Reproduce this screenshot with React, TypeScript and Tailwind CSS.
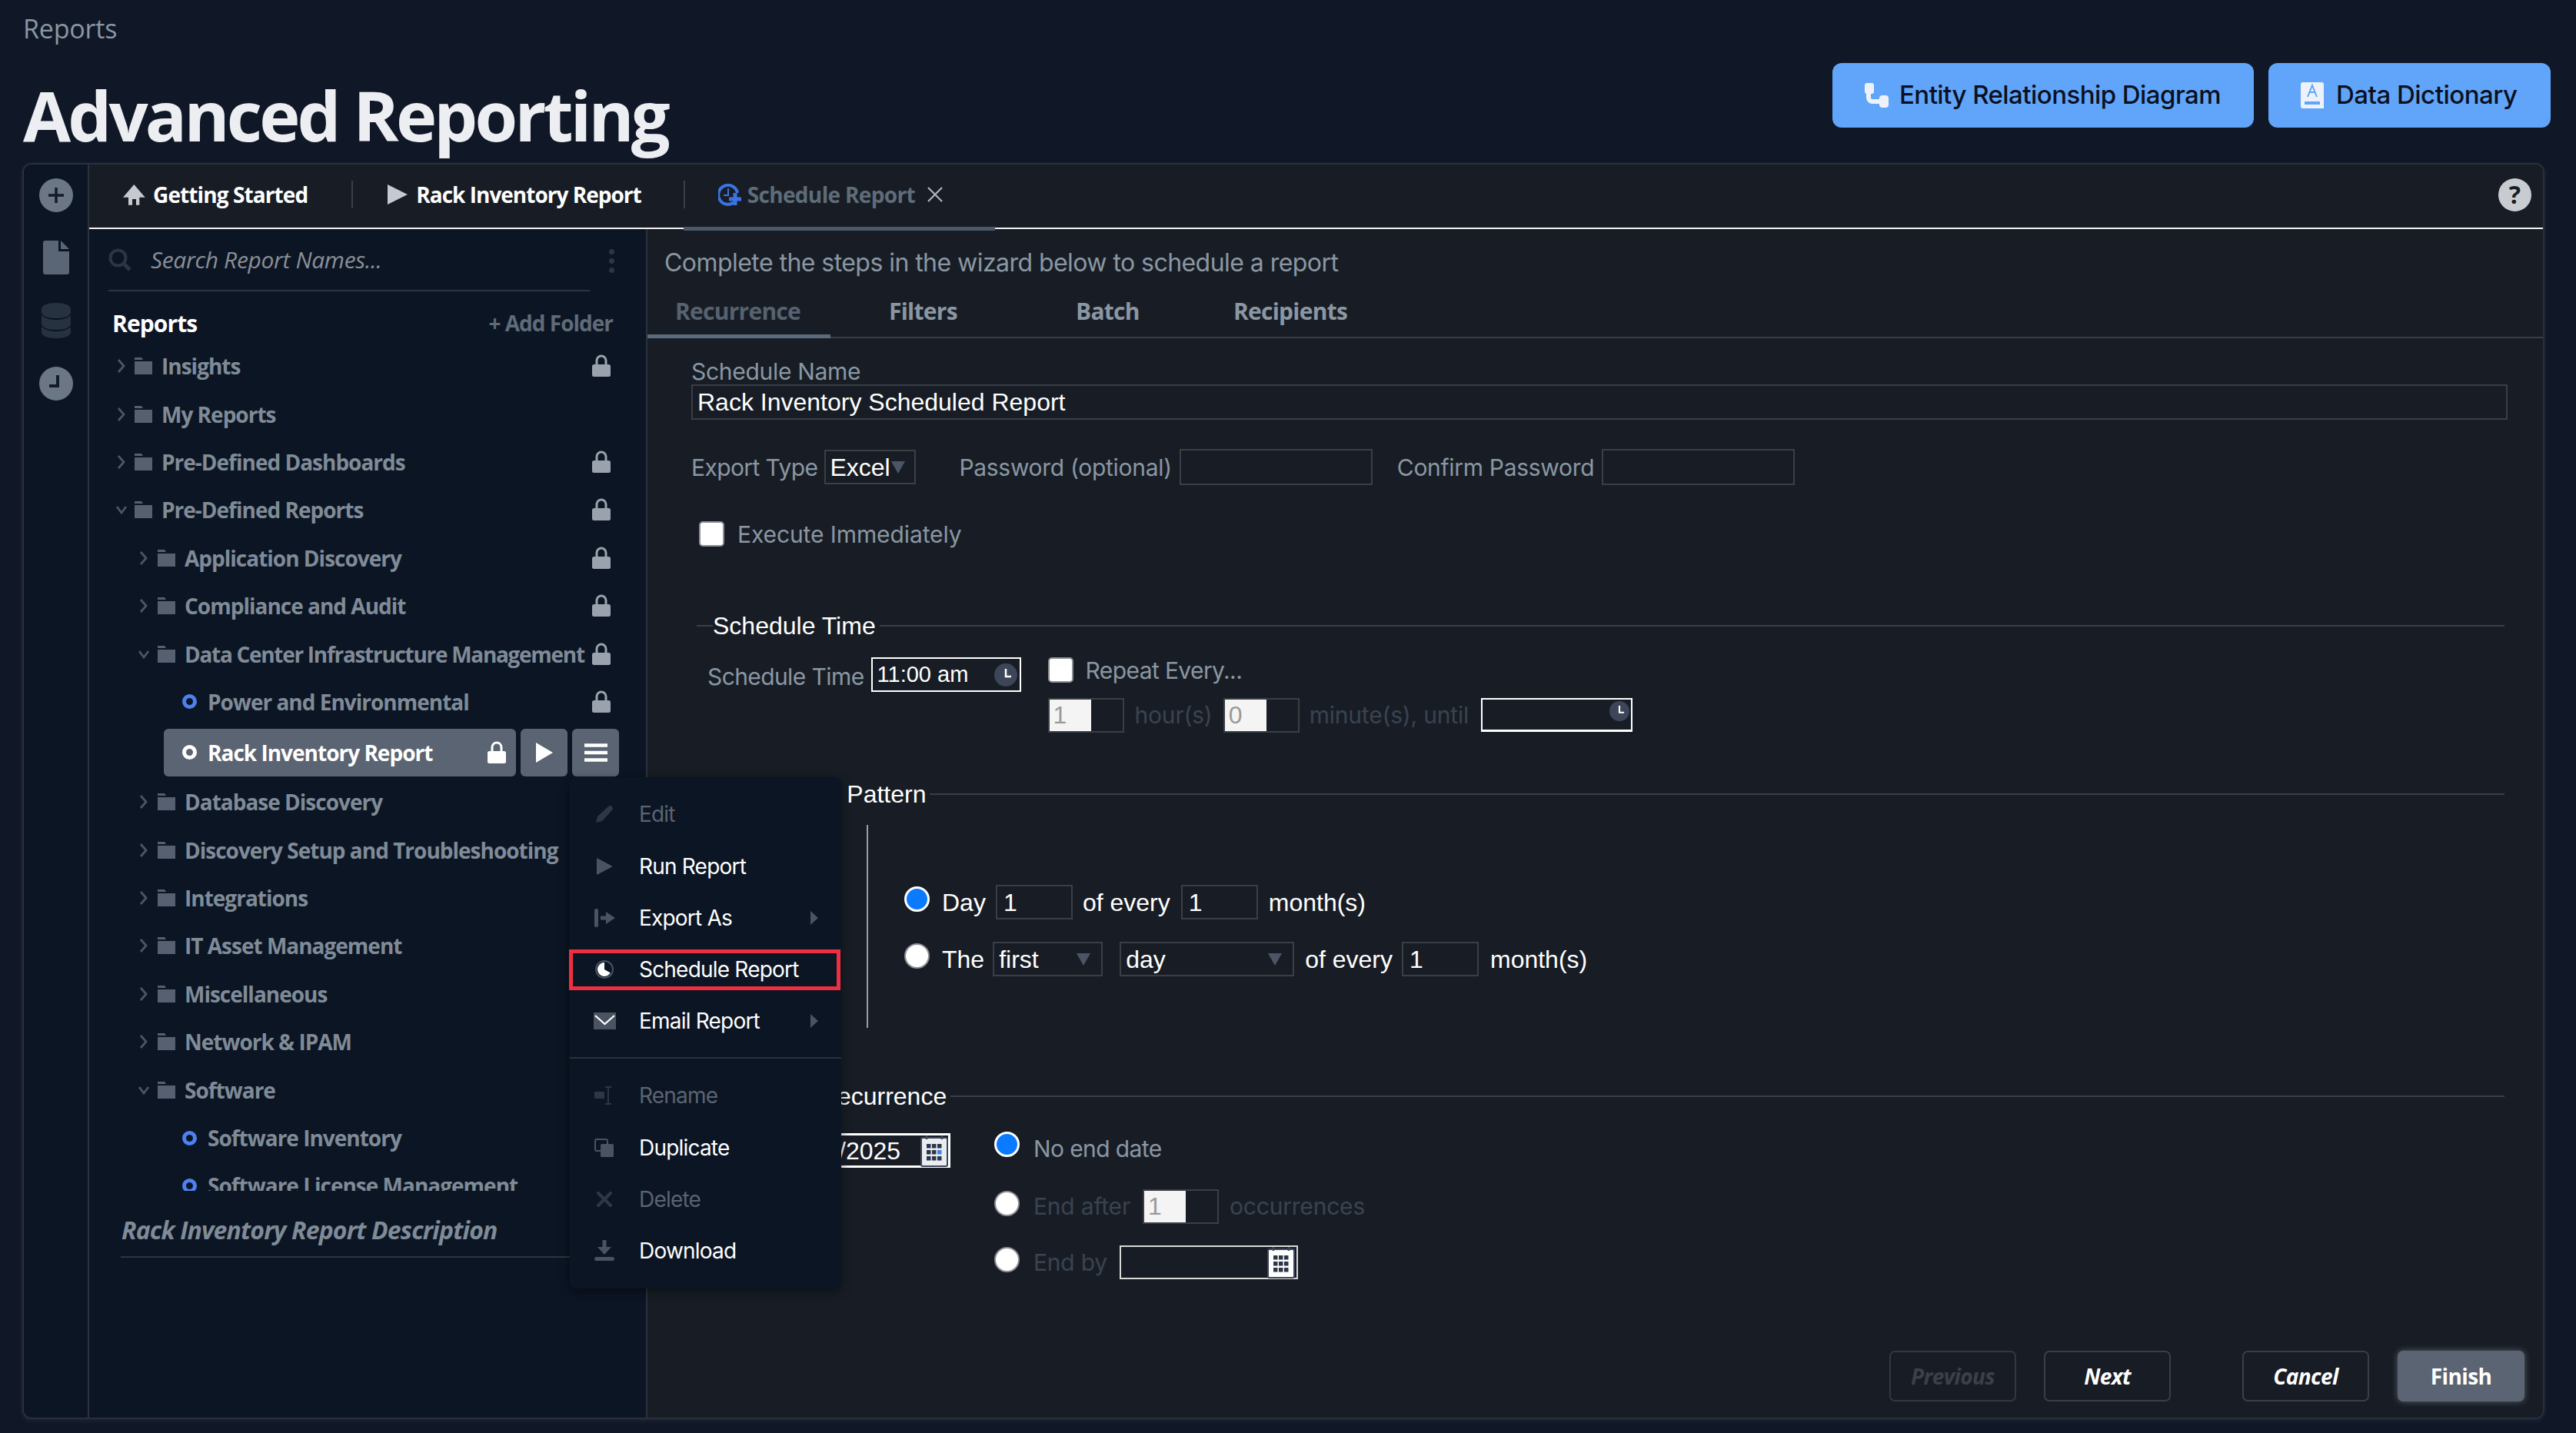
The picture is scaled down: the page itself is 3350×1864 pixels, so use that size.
import React from "react";

const LINE = "bg-[#3a3e45]";
const UI = "font-['Inter',sans-serif]";
const OS = "font-['Open_Sans',sans-serif]";
const AR = "font-['Liberation_Sans',sans-serif]";
const LBL = "font-['Inter',sans-serif] text-[30px] leading-[36px] tracking-[-0.3px] text-[#8a97a3] whitespace-nowrap";
const LBL2 = "font-['Inter',sans-serif] text-[30px] leading-[36px] tracking-[-0.6px] text-[#8a97a3] whitespace-nowrap";
const LBL3 = "font-['Inter',sans-serif] text-[30px] leading-[36px] tracking-[-0.1px] text-[#8a97a3] whitespace-nowrap";
const WHT = "font-['Liberation_Sans',sans-serif] text-[32px] leading-[36px] text-white whitespace-nowrap";
const DIM = "font-['Inter',sans-serif] text-[30px] leading-[36px] tracking-[-0.2px] text-[#3a4350] whitespace-nowrap";
const TREE = "font-['Open_Sans',sans-serif] text-[28px] font-bold tracking-[-1px] whitespace-nowrap";
const TREE_T = "font-['Open_Sans',sans-serif] text-[28px] font-bold tracking-[-1.3px] whitespace-nowrap";

const Lock = ({ c = "#9aa3ad" }: { c?: string }) => (
  <svg width="26" height="30" viewBox="0 0 26 30" className="shrink-0">
    <path d="M7 14V8a6 6 0 0 1 12 0v6" fill="none" stroke={c} strokeWidth="3" />
    <rect x="1" y="13" width="24" height="16" rx="2.5" fill={c} />
  </svg>
);
const Chevron = ({ open }: { open?: boolean }) => (
  <svg width="14" height="18" viewBox="0 0 14 18" className="shrink-0">
    {open ? (
      <path d="M1 5l6 8 6-8" fill="none" stroke="#4c5663" strokeWidth="2.8" />
    ) : (
      <path d="M3 1l7 8-7 8" fill="none" stroke="#4c5663" strokeWidth="2.8" />
    )}
  </svg>
);
const Folder = () => (
  <svg width="25" height="22" viewBox="0 0 25 22" className="shrink-0">
    <path d="M1 0h9l2 3H1z" fill="#566070" />
    <rect x="1" y="5" width="23" height="17" fill="#566070" />
  </svg>
);
const Dot = ({ c = "#4b82f0" }: { c?: string }) => (
  <span className="w-[19px] h-[19px] shrink-0 rounded-full border-[5px]" style={{ borderColor: c }} />
);

type RowP = { label: string; level: 1 | 2; open?: boolean; lock?: boolean; tight?: boolean };
const FolderRow = ({ label, level, open, lock, tight }: RowP) => (
  <div className={`h-[62.4px] flex items-center shrink-0 pr-[45px] ${level === 1 ? "pl-[35px]" : "pl-[64px]"}`}>
    <Chevron open={open} />
    <span className={level === 1 ? "ml-[9px]" : "ml-[10px]"}><Folder /></span>
    <span className={`${tight ? TREE_T : TREE} ml-[11px] text-[#7f8b97]`}>{label}</span>
    {lock && <span className="ml-auto"><Lock /></span>}
  </div>
);
const LeafRow = ({ label, lock }: { label: string; lock?: boolean }) => (
  <div className="h-[62.4px] flex items-center shrink-0 pl-[121px] pr-[45px]">
    <Dot />
    <span className={`${TREE} ml-[14px] text-[#7f8b97]`}>{label}</span>
    {lock && <span className="ml-auto"><Lock /></span>}
  </div>
);

const MItem = ({ icon, label, dim, arrow, cls = "" }: { icon: React.ReactNode; label: string; dim?: boolean; arrow?: boolean; cls?: string }) => (
  <div className={`flex items-center h-[67px] relative ${cls}`}>
    <span className="w-[90px] flex justify-center shrink-0">{icon}</span>
    <span className={`${UI} text-[28px] tracking-[-0.8px] whitespace-nowrap ${dim ? "text-[#5a6472]" : "text-white"}`}>{label}</span>
    {arrow && (
      <svg width="12" height="18" viewBox="0 0 12 18" className="absolute right-[29px]"><path d="M1 0l10 9-10 9z" fill="#4a5361" /></svg>
    )}
  </div>
);

const Menu = () => (
  <div className="absolute left-[625px] top-[713px] w-[353px] h-[665px] bg-[#0c1524] rounded-[8px] shadow-[0_4px_14px_rgba(0,0,0,0.45)] z-10 pt-[14px]">
    <MItem dim label="Edit" icon={
      <svg width="22" height="22" viewBox="0 0 22 22"><path d="M0 22l2-8L15 2l2-1.500a2 2 0 0 1 3 0l1.500 1.500a2 2 0 0 1 0 3L20 7 8 20z" fill="#2f3745" /></svg>
    } />
    <MItem label="Run Report" cls="mt-[1px]" icon={
      <svg width="20" height="22" viewBox="0 0 20 22"><path d="M2 1l17 9a1 1 0 0 1 0 2L2 21a1 1 0 0 1-2-1V2a1 1 0 0 1 2-1z" fill="#4a5361" /></svg>
    } />
    <MItem label="Export As" arrow icon={
      <svg width="27" height="24" viewBox="0 0 27 24"><rect x="0" y="0" width="5" height="24" rx="2" fill="#4a5361" /><path d="M8 9.500h7V4l12 8-12 8v-5.500H8z" fill="#4a5361" /></svg>
    } />
    <MItem label="Schedule Report" icon={
      <svg width="24" height="24" viewBox="0 0 24 24"><circle cx="12" cy="12" r="11" fill="none" stroke="#4a5361" strokeWidth="2" /><path d="M12 12V3A9 9 0 1 0 19.800 16.500z" fill="#fff" /></svg>
    } />
    <MItem label="Email Report" arrow icon={
      <svg width="29" height="22" viewBox="0 0 29 22"><rect width="29" height="22" fill="#4a5361" /><path d="M2 4l12.500 11L27 4" fill="none" stroke="#fff" strokeWidth="2.2" /></svg>
    } />
    <div className="h-[2px] bg-[#2a313c] mt-[14px] mb-[14px]" />
    <MItem dim label="Rename" icon={
      <svg width="26" height="24" viewBox="0 0 26 24"><rect x="0" y="7" width="13" height="9" rx="1" fill="#2e3644" /><path d="M18 1v22M14 1h8M14 23h8" stroke="#2e3644" strokeWidth="2" fill="none" /></svg>
    } />
    <MItem label="Duplicate" cls="mt-[1px]" icon={
      <svg width="26" height="24" viewBox="0 0 26 24"><rect x="1" y="1" width="16" height="15" rx="2" fill="none" stroke="#4a5361" strokeWidth="2" /><rect x="8" y="7" width="17" height="17" rx="1.5" fill="#4a5361" /></svg>
    } />
    <MItem dim label="Delete" icon={
      <svg width="20" height="20" viewBox="0 0 20 20"><path d="M2 2l16 16M18 2L2 18" stroke="#2f3745" strokeWidth="4.2" strokeLinecap="round" fill="none" /></svg>
    } />
    <MItem label="Download" icon={
      <svg width="26" height="28" viewBox="0 0 26 28"><path d="M10.500 1a2.500 2.500 0 0 1 5 0v8H22l-9 10-9-10h6.500z" fill="#4a5361" /><rect x="0" y="22" width="26" height="5" rx="2.5" fill="#4a5361" /></svg>
    } />
    <div className="absolute left-[-1px] top-[224px] w-[353px] h-[53px] border-[5px] border-[#ef2f3f]" />
  </div>
);

const Sidebar = () => (
  <div className="relative w-[726px] h-full shrink-0 bg-[#0c1524] border-r-2 border-[#2c323b] flex flex-col">
    <div className="ml-[25px] h-[81px] shrink-0 border-b-2 border-[#2c3440] flex items-center w-[626px]">
      <svg width="30" height="30" viewBox="0 0 30 30" className="shrink-0">
        <circle cx="12.500" cy="12.500" r="10" fill="none" stroke="#2b3543" strokeWidth="4" />
        <path d="M20 20l8 8" stroke="#2b3543" strokeWidth="5" />
      </svg>
      <span className={`${OS} ml-[25px] italic text-[30px] font-medium tracking-[-0.35px] text-[#8a8f96]`}>Search Report Names...</span>
    </div>
    <div className="absolute left-[676px] top-[26px] flex flex-col gap-[5px]">
      <span className="w-[7px] h-[7px] rounded-full bg-[#2e3644]" />
      <span className="w-[7px] h-[7px] rounded-full bg-[#2e3644]" />
      <span className="w-[7px] h-[7px] rounded-full bg-[#2e3644]" />
    </div>
    <div className="h-[66px] shrink-0 pt-[16px] pl-[30px] pr-[43px] flex items-center justify-between">
      <span className={`${OS} text-[30px] font-bold tracking-[-0.9px] text-white`}>Reports</span>
      <span className={`${TREE} text-[#5f6b78]`}>+ Add Folder</span>
    </div>
    <div className="h-[1104px] shrink-0 overflow-hidden flex flex-col">
      <FolderRow level={1} label="Insights" lock />
      <FolderRow level={1} label="My Reports" />
      <FolderRow level={1} label="Pre-Defined Dashboards" lock />
      <FolderRow level={1} open label="Pre-Defined Reports" lock />
      <FolderRow level={2} label="Application Discovery" lock />
      <FolderRow level={2} label="Compliance and Audit" lock />
      <FolderRow level={2} open tight label="Data Center Infrastructure Management" lock />
      <LeafRow label="Power and Environmental" lock />
      <div className="h-[67px] mt-[1px] shrink-0 flex items-center pl-[97px] gap-[6px]">
        <div className="w-[458px] h-[62px] rounded-[6px] bg-[#5a6472] flex items-center pl-[24px] pr-[12px]">
          <Dot c="#ffffff" />
          <span className={`${TREE} ml-[14px] text-white`}>Rack Inventory Report</span>
          <span className="ml-auto"><Lock c="#ffffff" /></span>
        </div>
        <div className="w-[61px] h-[62px] rounded-[6px] bg-[#5a6472] flex items-center justify-center">
          <svg width="24" height="26" viewBox="0 0 24 26"><path d="M1 0l22 13L1 26z" fill="#fff" /></svg>
        </div>
        <div className="w-[61px] h-[62px] rounded-[6px] bg-[#5a6472] flex items-center justify-center">
          <svg width="30" height="24" viewBox="0 0 30 24"><path d="M0 2.500h30M0 12h30M0 21.500h30" stroke="#fff" strokeWidth="4.5" /></svg>
        </div>
      </div>
      <FolderRow level={2} label="Database Discovery" />
      <FolderRow level={2} label="Discovery Setup and Troubleshooting" />
      <FolderRow level={2} label="Integrations" />
      <FolderRow level={2} label="IT Asset Management" />
      <FolderRow level={2} label="Miscellaneous" />
      <FolderRow level={2} label="Network & IPAM" />
      <FolderRow level={2} open label="Software" />
      <LeafRow label="Software Inventory" />
      <LeafRow label="Software License Management" />
    </div>
    <div className="ml-[41px] mr-[70px] h-[87px] shrink-0 border-b-2 border-[#2c3440] flex items-center pl-[1px] pt-[17px]">
      <span className={`${OS} text-[32px] font-bold italic tracking-[-0.85px] text-[#7f8b97] whitespace-nowrap`}>Rack Inventory Report Description</span>
    </div>
    <Menu />
  </div>
);

const Box = ({ w, h = 45, value, cls = "" }: { w: number; h?: number; value?: string; cls?: string }) => (
  <div className={`${WHT} flex items-center pl-[8px] border-2 border-[#3a3e45] shrink-0 ${cls}`} style={{ width: w, height: h }}>{value}</div>
);
const Filled = ({ v }: { v: string }) => (
  <div className="w-[99px] h-[45px] border-2 border-[#3a3e45] shrink-0 flex">
    <div className={`${AR} w-[54px] bg-[#f4f4f4] text-[32px] leading-[41px] pl-[5px] text-[#9a9a9a]`}>{v}</div>
  </div>
);
const Caret = () => (
  <svg width="18" height="16" viewBox="0 0 18 16" className="shrink-0"><path d="M0 0h18l-9 16z" fill="#4c5566" /></svg>
);
const Sel = ({ w, value }: { w: number; value: string }) => (
  <div className={`${WHT} flex items-center justify-between pl-[6px] pr-[14px] border-2 border-[#3a3e45] shrink-0 h-[45px]`} style={{ width: w }}>
    {value}
    <Caret />
  </div>
);
const Check = ({ cls = "" }: { cls?: string }) => (
  <span className={`w-[33px] h-[33px] rounded-[5px] bg-white border-2 border-[#8c8f96] shrink-0 ${cls}`} />
);
const Radio = ({ on }: { on?: boolean }) =>
  on ? (
    <span className="w-[33px] h-[33px] rounded-full bg-[#0a7aff] border-[3px] border-white shrink-0 block" />
  ) : (
    <span className="w-[33px] h-[33px] rounded-full bg-white border-2 border-[#8c8f96] shrink-0 block" />
  );
const Legend = ({ label, cls = "" }: { label: string; cls?: string }) => (
  <div className={`h-[36px] flex items-center shrink-0 pl-[7px] pr-[4px] ${cls}`}>
    <div className={`h-[2px] w-[21px] shrink-0 ${LINE}`} />
    <span className={`${AR} text-[32px] leading-[36px] text-white whitespace-nowrap`}>{label}</span>
    <div className={`h-[2px] flex-1 ml-[5px] ${LINE}`} />
  </div>
);
const ClockIc = ({ size = 30 }: { size?: number }) => (
  <svg width={size} height={size} viewBox="0 0 30 30" className="shrink-0">
    <circle cx="15" cy="15" r="15" fill="#3d4658" />
    <path d="M15 7v10h7" fill="none" stroke="#fff" strokeWidth="2.5" />
  </svg>
);
const Cal = ({ blue }: { blue?: boolean }) => (
  <svg width="36" height="42" viewBox="0 0 36 42" className="shrink-0">
    <rect x="1" y="4" width="34" height="37" rx="2" fill={blue ? "#e9edf2" : "#fff"} stroke="#3d4658" strokeWidth="2" />
    {[12, 20, 28].map((y) =>
      [8, 15, 22].map((x) => <rect key={`${x}-${y}`} x={x} y={y} width="5.5" height="5.5" fill={blue && x === 22 && y === 20 ? "#3b82f6" : "#2d3648"} />)
    )}
    <path d="M8 1v5M28 1v5" stroke="#3d4658" strokeWidth="2.5" />
  </svg>
);

const Content = () => (
  <div className="flex-1 h-full bg-[#181d25] flex flex-col min-w-0">
    <div className={`${UI} mt-[26px] ml-[22px] h-[36px] text-[32px] leading-[36px] tracking-[-0.55px] text-[#8a97a3] whitespace-nowrap shrink-0`}>
      Complete the steps in the wizard below to schedule a report
    </div>
    <div className="mt-[17px] h-[63px] shrink-0 border-b-2 border-[#3a3e45] flex">
      {[
        { t: "Recurrence", w: 238, on: true },
        { t: "Filters", w: 243 },
        { t: "Batch", w: 205 },
        { t: "Recipients", w: 300 },
      ].map((x) => (
        <div key={x.t} className={`h-[63px] shrink-0 pt-[5px] ${x.t === "Recurrence" ? "pl-[36px] border-b-[5px] border-[#5a6b7d]" : "pl-[76px]"}`} style={{ width: x.w }}>
          <span className={`${OS} text-[30px] font-bold tracking-[-0.75px] whitespace-nowrap ${x.on ? "text-[#566270]" : "text-[#8a97a3]"}`}>{x.t}</span>
        </div>
      ))}
    </div>

    <div className="pl-[57px] pr-[46px] flex flex-col flex-1 min-h-0">
      <div className={`${LBL} mt-[25px] h-[35px] shrink-0`}>Schedule Name</div>
      <div className={`${WHT} h-[46px] shrink-0 border-2 border-[#3a3e45] pl-[6px] flex items-center`}>Rack Inventory Scheduled Report</div>

      <div className="mt-[38px] h-[47px] shrink-0 flex items-center">
        <span className={LBL2}>Export Type</span>
        <div className={`${WHT} ml-[9px] w-[119px] h-[45px] border-2 border-[#3a3e45] flex items-center pl-[5px] gap-[1px] shrink-0`}>Excel<Caret /></div>
        <span className={`${LBL} ml-[56px]`}>Password (optional)</span>
        <Box w={251} h={47} cls="ml-[10px]" />
        <span className={`${LBL} ml-[32px]`}>Confirm Password</span>
        <Box w={251} h={47} cls="ml-[10px]" />
      </div>

      <div className="mt-[47px] h-[33px] shrink-0 flex items-center pl-[10px]">
        <Check />
        <span className={`${LBL3} ml-[17px]`}>Execute Immediately</span>
      </div>

      <Legend label="Schedule Time" cls="mt-[85px]" />

      <div className="mt-[23px] h-[97px] shrink-0 flex items-start">
        <span className={`${LBL2} ml-[21px] mt-[7px]`}>Schedule Time</span>
        <div className="ml-[9px] w-[195px] h-[45px] border-2 border-white flex items-center pl-[6px] pr-[3px] justify-between shrink-0">
          <span className={`${AR} text-[29px] text-white`}>11:00 am</span>
          <ClockIc />
        </div>
        <div className="ml-[35px] flex flex-col">
          <div className="flex items-center h-[33px]">
            <Check />
            <span className={`${LBL2} ml-[16px]`}>Repeat Every...</span>
          </div>
          <div className="mt-[20px] flex items-center h-[44px]">
            <Filled v="1" />
            <span className={`${DIM} ml-[14px]`}>hour(s)</span>
            <span className="ml-[14px]"><Filled v="0" /></span>
            <span className={`${DIM} ml-[13px]`}>minute(s), until</span>
            <div className="ml-[16px] w-[197px] h-[44px] border-2 border-white border-b-[3px] flex items-start justify-end pr-[2px] pt-[2px]"><ClockIc size={26} /></div>
          </div>
        </div>
      </div>

      <Legend label="Recurrence Pattern" cls="mt-[63px]" />

      <div className="mt-[22px] ml-[228px] h-[264px] shrink-0 border-l-2 border-[#9a9ea3] flex flex-col pl-[47px]">
        <div className="mt-[78px] h-[45px] flex items-center">
          <span className="-mt-[8px]"><Radio on /></span>
          <span className={`${WHT} ml-[16px]`}>Day</span>
          <Box w={100} value="1" cls="ml-[13px]" />
          <span className={`${WHT} ml-[13px]`}>of every</span>
          <Box w={100} value="1" cls="ml-[14px]" />
          <span className={`${WHT} ml-[14px]`}>month(s)</span>
        </div>
        <div className="mt-[29px] h-[45px] flex items-center">
          <span className="-mt-[8px]"><Radio /></span>
          <span className={`${WHT} ml-[16px] mr-[11px]`}>The</span>
          <Sel w={143} value="first" />
          <span className="ml-[22px]"><Sel w={227} value="day" /></span>
          <span className={`${WHT} ml-[14px]`}>of every</span>
          <Box w={100} value="1" cls="ml-[12px]" />
          <span className={`${WHT} ml-[15px]`}>month(s)</span>
        </div>
      </div>

      <Legend label="Range of Recurrence" cls="mt-[71px]" />

      <div className="mt-[28px] flex items-start shrink-0">
        <div className="ml-[107px] mt-[2px] w-[230px] h-[45px] border-[3px] border-white flex items-center justify-between pl-[2px] shrink-0">
          <span className={`${AR} text-[32px] text-white`}>01/01/2025</span>
          <Cal blue />
        </div>
        <div className="ml-[57px] flex flex-col">
          <div className="h-[38px] flex items-start">
            <Radio on />
            <span className={`${LBL2} ml-[18px] mt-[4px]`}>No end date</span>
          </div>
          <div className="mt-[37px] h-[44px] flex items-center">
            <span className="-mt-[8px]"><Radio /></span>
            <span className={`${DIM} ml-[18px]`}>End after</span>
            <span className="ml-[16px]"><Filled v="1" /></span>
            <span className={`${DIM} ml-[14px]`}>occurrences</span>
          </div>
          <div className="mt-[29px] h-[44px] flex items-center">
            <span className="-mt-[8px]"><Radio /></span>
            <span className={`${DIM} ml-[18px]`}>End by</span>
            <div className="ml-[16px] w-[232px] h-[44px] border-2 border-[#d8d8d8] flex items-center justify-end pr-[2px]"><Cal /></div>
          </div>
        </div>
      </div>
    </div>

    <div className="flex justify-end pr-[24px] mb-[21px] shrink-0">
      <Btn label="Previous" cls="italic text-[#3c4047] border-[#34373d]" />
      <Btn label="Next" cls="italic text-white border-[#3a3e45] ml-[36px]" />
      <Btn label="Cancel" cls="italic text-white border-[#3a3e45] ml-[93px]" />
      <Btn label="Finish" cls="text-white bg-[#5a6472] border-[#5a6472] ml-[37px] shadow-[0_0_8px_rgba(160,170,185,0.45)]" />
    </div>
  </div>
);
const Btn = ({ label, cls }: { label: string; cls: string }) => (
  <div className={`${OS} w-[165px] h-[66px] rounded-[7px] border-2 flex items-center justify-center text-[28px] font-bold tracking-[-0.6px] ${cls}`}>{label}</div>
);

const Rail = () => (
  <div className="w-[85px] h-full shrink-0 bg-[#0c1524] border-r-2 border-[#2c323b] flex flex-col items-center pt-[18px]">
    <svg width="44" height="44" viewBox="0 0 44 44">
      <circle cx="22" cy="22" r="22" fill="#6b7785" />
      <path d="M22 12v20M12 22h20" stroke="#141b27" strokeWidth="3.5" />
    </svg>
    <svg width="34" height="44" viewBox="0 0 34 44" className="mt-[37px]">
      <path d="M3 0h17v14h14v27a3 3 0 0 1-3 3H3a3 3 0 0 1-3-3V3a3 3 0 0 1 3-3zM23 0l11 11H23z" fill="#5a6675" />
    </svg>
    <svg width="38" height="46" viewBox="0 0 38 46" className="mt-[37px]">
      <path d="M0 8c0-5 8-8 19-8s19 3 19 8v4c0 5-8 8-19 8S0 17 0 12zM0 16c4 4 11 6 19 6s15-2 19-6v11c0 5-8 8-19 8S0 32 0 27zM0 31c4 4 11 6 19 6s15-2 19-6v7c0 5-8 8-19 8S0 43 0 38z" fill="#273241" />
    </svg>
    <svg width="44" height="44" viewBox="0 0 44 44" className="mt-[37px]">
      <circle cx="22" cy="22" r="22" fill="#6b7785" />
      <path d="M24 11v14H13" fill="none" stroke="#141b27" strokeWidth="4" />
    </svg>
  </div>
);

const TabBar = () => (
  <div className="relative h-[84px] shrink-0 bg-[#181d25] border-b-2 border-[#f2f2f2] flex items-center pb-[4px]">
    <div className="absolute left-[773px] bottom-[-4px] w-[405px] h-[5px] bg-[#4d5968]" />
    <svg width="29" height="27" viewBox="0 0 29 27" className="ml-[44px]">
      <path d="M14.300 0L28.700 16.700H21.300V26.700H17V19H12V26.700H7V16.700H0z" fill="#c6cad0" />
    </svg>
    <span className={`${OS} ml-[10px] text-[28px] font-bold tracking-[-0.9px] text-white whitespace-nowrap`}>Getting Started</span>
    <div className="ml-[57px] w-[2px] h-[36px] bg-[#3a3e45]" />
    <svg width="26" height="26" viewBox="0 0 26 26" className="ml-[45px]"><path d="M0 0l26 13L0 26z" fill="#c6cad0" /></svg>
    <span className={`${OS} ml-[11px] text-[28px] font-bold tracking-[-1px] text-white whitespace-nowrap`}>Rack Inventory Report</span>
    <div className="ml-[55px] w-[2px] h-[36px] bg-[#3a3e45]" />
    <svg width="30" height="29" viewBox="0 0 30 29" className="ml-[43px]">
      <path d="M20 24.500A12.500 12.500 0 1 1 25 12" fill="none" stroke="#3b74e0" strokeWidth="4" />
      <path d="M13 6v9H7" fill="none" stroke="#3b74e0" strokeWidth="2" />
      <path d="M22 12v16M14 20h16" stroke="#3b74e0" strokeWidth="5" />
    </svg>
    <span className={`${OS} ml-[8px] text-[28px] font-bold tracking-[-0.65px] text-[#5f6c79] whitespace-nowrap`}>Schedule Report</span>
    <svg width="22" height="22" viewBox="0 0 22 22" className="ml-[15px]"><path d="M2 2l18 18M20 2L2 20" stroke="#aeb4bb" strokeWidth="2.2" /></svg>
    <div className={`${OS} ml-auto mr-[15px] w-[43px] h-[43px] rounded-full bg-[#c8ccd1] text-[#181d25] text-[32px] font-bold flex items-center justify-center`}>?</div>
  </div>
);

export default function App() {
  return (
    <div className="w-[3350px] h-[1864px] bg-[#101828] overflow-hidden flex flex-col">
      <div className="h-[212px] shrink-0 flex justify-between pl-[30px] pr-[33px]">
        <div className="flex flex-col">
          <div className={`${OS} mt-[14px] text-[34px] leading-[46px] tracking-[-0.2px] text-[#8a97a3]`}>Reports</div>
          <h1 className={`${OS} mt-[34px] text-[90px] leading-[110px] font-bold tracking-[-3.8px] text-[#eceef2] whitespace-nowrap`}>Advanced Reporting</h1>
        </div>
        <div className="flex gap-[19px] mt-[82px] h-[84px]">
          <div className="w-[548px] rounded-[12px] bg-[#60a5fa] flex items-center pl-[41px]">
            <svg width="32" height="32" viewBox="0 0 32 32" className="shrink-0">
              <path d="M6 8v11a5 5 0 0 0 5 5h10" fill="none" stroke="#eef2f8" strokeWidth="6" />
              <rect x="1" y="0" width="12" height="14" rx="3" fill="#eef2f8" />
              <rect x="20" y="16" width="12" height="16" rx="4" fill="#eef2f8" />
            </svg>
            <span className={`${UI} ml-[14px] text-[33px] font-medium tracking-[-0.55px] text-[#0a1020] whitespace-nowrap`}>Entity Relationship Diagram</span>
          </div>
          <div className="w-[367px] rounded-[12px] bg-[#60a5fa] flex items-center pl-[42px]">
            <svg width="30" height="34" viewBox="0 0 30 34" className="shrink-0">
              <path d="M3 0h24a3 3 0 0 1 3 3v31H3a3 3 0 0 1-3-3V3a3 3 0 0 1 3-3z" fill="#eef2f8" />
              <path d="M9 19l6-15 6 15M11.500 13h7" fill="none" stroke="#60a5fa" strokeWidth="2" />
              <rect x="5" y="25" width="20" height="4" fill="#60a5fa" />
            </svg>
            <span className={`${UI} ml-[16px] text-[33px] font-medium tracking-[-0.5px] text-[#0a1020] whitespace-nowrap`}>Data Dictionary</span>
          </div>
        </div>
      </div>
      <div className="ml-[29px] w-[3280px] h-[1634px] shrink-0 rounded-[12px] border-2 border-[#2a303b] bg-[#181d25] overflow-hidden flex shadow-[0_2px_6px_rgba(120,130,150,0.15)]">
        <Rail />
        <div className="flex-1 flex flex-col min-w-0">
          <TabBar />
          <div className="flex-1 flex min-h-0">
            <Sidebar />
            <Content />
          </div>
        </div>
      </div>
    </div>
  );
}
